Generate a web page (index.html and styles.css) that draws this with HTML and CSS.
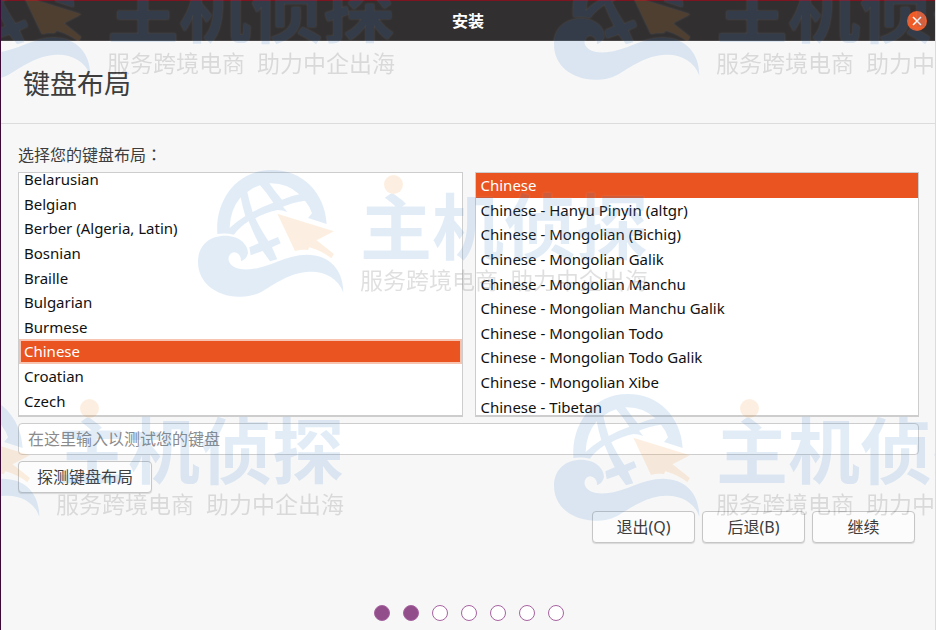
FILE: index.html
```html
<!DOCTYPE html>
<html lang="zh-CN">
<head>
    <meta charset="UTF-8">
    <meta name="viewport" content="width=device-width, initial-scale=1.0">
    <title>安装</title>
    <link rel="stylesheet" href="styles.css">
</head>
<body>
    <div class="window">
        <div class="titlebar">
            <span class="title">安装</span>
            <button class="close" aria-label="关闭">
                <svg viewBox="0 0 20 20"><path d="M6 6l8 8M14 6l-8 8"/></svg>
            </button>
        </div>

        <header class="header">
            <h1>键盘布局</h1>
        </header>

        <main class="content">
            <label class="prompt" id="layoutLabel" for="testInput">选择您的键盘布局<span class="colon" lang="zh-TW">：</span></label>
            <div class="lists">
                <div class="list">
                    <ul class="rows scrolled" id="layouts" role="listbox" aria-labelledby="layoutLabel">
                        <li role="option">Belarusian</li>
                        <li role="option">Belgian</li>
                        <li role="option">Berber (Algeria, Latin)</li>
                        <li role="option">Bosnian</li>
                        <li role="option">Braille</li>
                        <li role="option">Bulgarian</li>
                        <li role="option">Burmese</li>
                        <li role="option" class="selected focused" aria-selected="true">Chinese</li>
                        <li role="option">Croatian</li>
                        <li role="option">Czech</li>
                    </ul>
                </div>
                <div class="list">
                    <ul class="rows" id="variants" role="listbox" aria-labelledby="layoutLabel">
                        <li role="option" class="selected" aria-selected="true">Chinese</li>
                        <li role="option">Chinese - Hanyu Pinyin (altgr)</li>
                        <li role="option">Chinese - Mongolian (Bichig)</li>
                        <li role="option">Chinese - Mongolian Galik</li>
                        <li role="option">Chinese - Mongolian Manchu</li>
                        <li role="option">Chinese - Mongolian Manchu Galik</li>
                        <li role="option">Chinese - Mongolian Todo</li>
                        <li role="option">Chinese - Mongolian Todo Galik</li>
                        <li role="option">Chinese - Mongolian Xibe</li>
                        <li role="option">Chinese - Tibetan</li>
                    </ul>
                </div>
            </div>
            <input class="test" id="testInput" type="text" placeholder="在这里输入以测试您的键盘">
            <button class="btn detect">探测键盘布局</button>
            <div class="actions">
                <button class="btn">退出(Q)</button>
                <button class="btn">后退(B)</button>
                <button class="btn">继续</button>
            </div>
        </main>

        <footer class="progress">
            <span class="dot done"></span>
            <span class="dot done"></span>
            <span class="dot"></span>
            <span class="dot"></span>
            <span class="dot"></span>
            <span class="dot"></span>
            <span class="dot"></span>
        </footer>

        <!-- watermark, repeated over the window -->
        <svg class="defs" aria-hidden="true">
            <symbol id="emblem" viewBox="24 30 438 384">
                <path fill="#3e87d0" fill-rule="evenodd" d="M82 222C75 120 140 30 245 30C340 30 405 100 410 192L354 174L366 160Q360 140 345 122Q310 126 279 140L292 156Q278 150 262 150Q225 158 196 175Q210 205 235 243L264 231L272 250L246 262L262 298L240 304L218 273L182 286L178 262L206 250Q190 220 176 184Q150 200 132 224Q105 218 82 222Z
                    M119 204Q120 150 152 112Q157 140 166 168Q140 184 119 204Z
                    M172 96Q190 82 210 76Q230 98 250 128Q215 140 188 156Q178 125 172 96Z
                    M238 70Q290 68 328 103Q300 108 276 119Q255 95 238 70Z"/>
                <path fill="#3e87d0" d="M24 305C24 255 60 227 105 227C150 227 175 255 174 280C170 295 162 300 153 304Q153 280 133 277C118 278 112 295 118 307C128 325 150 330 180 328C240 322 290 284 350 284C420 284 460 330 460 398C445 355 405 334 360 335C300 336 250 375 215 395C190 408 165 411 145 410C80 408 24 370 24 305Z"/>
                <path fill="#f09b3c" d="M262 161L432 214L380 241L432 282L424 295Q400 275 358 262L354 270Q335 268 315 273Z"/>
            </symbol>
        </svg>
        <div class="watermark wm-top-left" aria-hidden="true">
            <svg class="emblem"><use href="#emblem"/></svg>
            <div class="brand"><span class="name">主机侦探</span><span class="tagline">服务跨境电商  助力中企出海</span></div>
        </div>
        <div class="watermark wm-top-right" aria-hidden="true">
            <svg class="emblem"><use href="#emblem"/></svg>
            <div class="brand"><span class="name">主机侦探</span><span class="tagline">服务跨境电商  助力中企出海</span></div>
        </div>
        <div class="watermark wm-middle" aria-hidden="true">
            <svg class="emblem"><use href="#emblem"/></svg>
            <div class="brand"><span class="name">主机侦探</span><span class="tagline">服务跨境电商  助力中企出海</span></div>
        </div>
        <div class="watermark wm-bottom-left" aria-hidden="true">
            <svg class="emblem"><use href="#emblem"/></svg>
            <div class="brand"><span class="name">主机侦探</span><span class="tagline">服务跨境电商  助力中企出海</span></div>
        </div>
        <div class="watermark wm-bottom-right" aria-hidden="true">
            <svg class="emblem"><use href="#emblem"/></svg>
            <div class="brand"><span class="name">主机侦探</span><span class="tagline">服务跨境电商  助力中企出海</span></div>
        </div>
    </div>
</body>
</html>
```

FILE: styles.css
```css
* {
    box-sizing: border-box;
}
body {
    margin: 0;
    font-family: 'Noto Sans', 'Noto Sans CJK SC', sans-serif;
    font-size: 16px;
    line-height: 24px;
    color: #3d3d3d;
}
.window {
    position: relative;
    display: flex;
    flex-direction: column;
    min-height: 100vh;
    overflow: hidden;
    background-color: #f7f7f7;
    border-left: 1px solid #3b0a35;
    border-right: 1px solid #dcdcdc;
}
.titlebar {
    display: grid;
    grid-template-columns: 1fr auto 1fr;
    align-items: center;
    height: 41px;
    padding: 0 8px;
    background-color: #322f30;
    border-top: 1px solid #7d1420;
    border-bottom: 1px solid #4a4748;
}
.title {
    grid-column: 2;
    color: #fff;
    font-weight: bold;
}
.close {
    justify-self: end;
    display: flex;
    width: 20px;
    height: 20px;
    padding: 0;
    border: none;
    border-radius: 50%;
    background-color: #f05a24;
}
.close svg {
    width: 20px;
    height: 20px;
    fill: none;
    stroke: #fff;
    stroke-width: 1.5;
}
.header {
    padding: 23px 22px 19px;
    border-bottom: 1px solid #dcdcdc;
}
h1 {
    margin: 0;
    font-size: 27px;
    font-weight: normal;
    line-height: 40px;
}
.content {
    display: flex;
    flex-direction: column;
    padding: 18px 16px 0 17px;
}
.prompt {
    margin-bottom: 5px;
}
.colon {
    font-family: 'Noto Sans CJK TC', sans-serif;
}
.lists {
    display: grid;
    grid-template-columns: 1fr 1fr;
    gap: 12px;
}
.list {
    height: 245px;
    overflow: hidden;
    background-color: #fff;
    border: 1px solid #cdcdcd;
    border-bottom-width: 2px;
}
.rows {
    display: grid;
    grid-auto-rows: 1fr;
    height: 246px;
    margin: 0;
    padding: 0;
    list-style: none;
    font-size: 15px;
    color: #111;
}
.rows.scrolled {
    margin-top: -6px;
}
.rows li {
    display: flex;
    align-items: center;
    padding: 0 5px;
    white-space: nowrap;
}
.rows .selected {
    color: #fff;
    background-color: #e95420;
}
.rows .focused {
    box-shadow: inset 0 0 0 2px #f7c4b2;
}
.test {
    height: 32px;
    margin-top: 6px;
    padding: 0 9px;
    border: 1px solid #cdcdcd;
    border-radius: 4px;
    background-color: #fff;
    font: inherit;
}
.test::placeholder {
    color: #8b8b8b;
}
.btn {
    height: 32px;
    padding: 0;
    border: 1px solid #c6c6c6;
    border-radius: 4px;
    background-color: #fcfcfc;
    box-shadow: 0 1px 1px rgba(0, 0, 0, 0.12);
    color: #3d3d3d;
    font: inherit;
}
.detect {
    align-self: flex-start;
    margin-top: 6px;
    padding: 0 18px;
}
.actions {
    display: flex;
    justify-content: flex-end;
    gap: 7px;
    margin: 18px 4px 0 0;
}
.actions .btn {
    width: 103px;
}
.progress {
    display: flex;
    justify-content: center;
    gap: 13px;
    margin-top: auto;
    padding: 0 0 9px 1px;
}
.dot {
    width: 16px;
    height: 16px;
    border: 1px solid #a763a0;
    border-radius: 50%;
    background-color: #fff;
}
.dot.done {
    background-color: #924d8b;
}

/* watermark */
.defs {
    position: absolute;
    width: 0;
    height: 0;
}
.watermark {
    position: absolute;
    display: flex;
    gap: 16px;
    opacity: 0.15;
    filter: drop-shadow(0 0 1px #fff);
    pointer-events: none;
}
.emblem {
    width: 146px;
    height: 128px;
}
.brand {
    position: relative;
    display: flex;
    flex-direction: column;
    padding-top: 16px;
    white-space: pre;
}
.brand::before {
    content: '';
    position: absolute;
    top: 5px;
    left: 24px;
    width: 19px;
    height: 19px;
    border-radius: 50%;
    background-color: #f09b3c;
}
.name {
    font-size: 72px;
    font-weight: bold;
    line-height: 80px;
    color: #3e87d0;
}
.tagline {
    font-size: 23px;
    line-height: 28px;
    color: #333;
}
.wm-top-left {
    top: -47px;
    left: -56px;
}
.wm-top-right {
    top: -47px;
    left: 553px;
}
.wm-middle {
    top: 170px;
    left: 197px;
}
.wm-bottom-left {
    top: 394px;
    left: -107px;
}
.wm-bottom-right {
    top: 394px;
    left: 553px;
}
```
